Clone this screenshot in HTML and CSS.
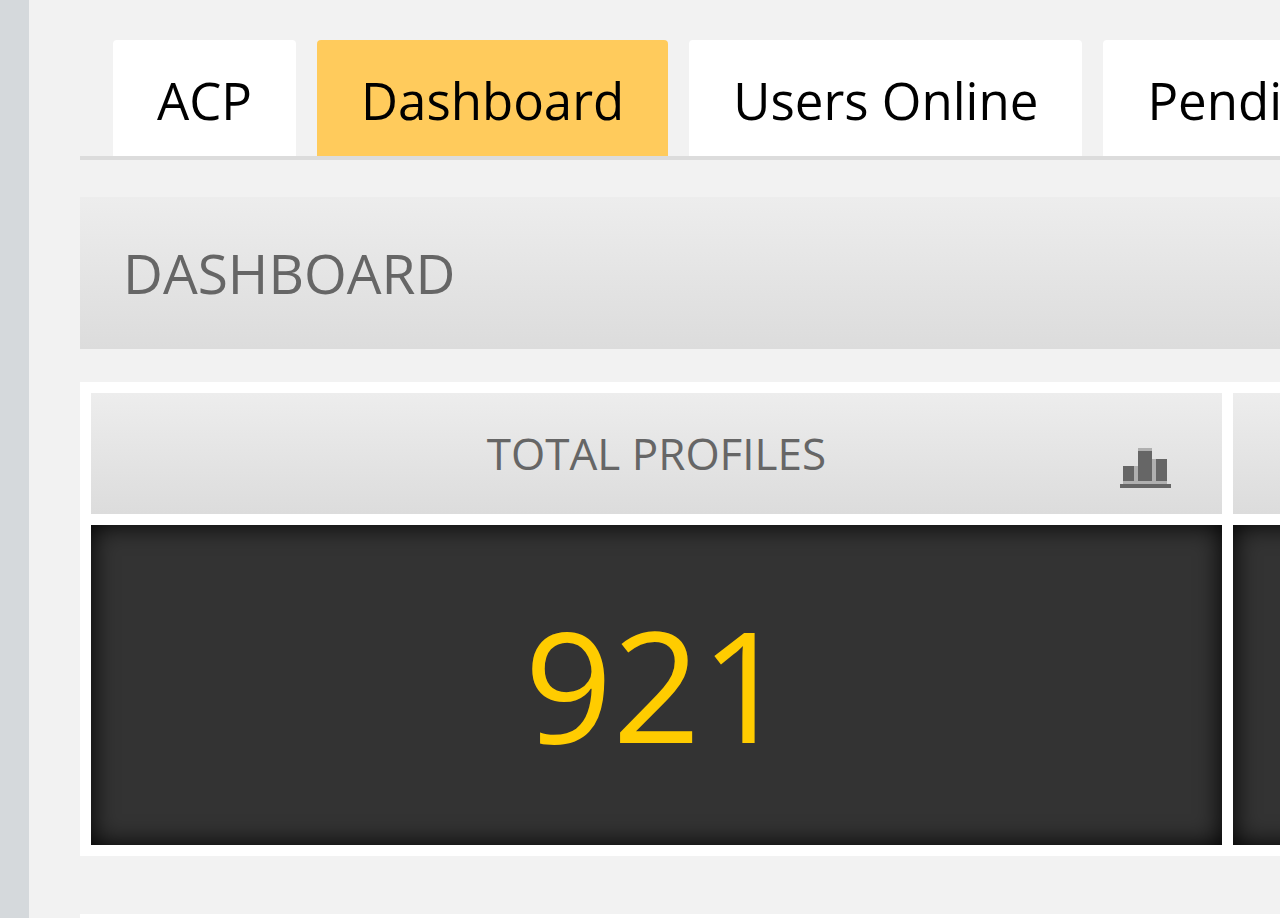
FILE: index.html
```
<!DOCTYPE html>
<html lang="en">
<head>
    <meta charset="utf-8">
    <title>Dashboard</title>
    <link rel="stylesheet" href="styles.css">
</head>

<body>

<div class="wrap">
	<div class="side"></div>
	<div class="main">
		<nav class="tabs">
			<a href="#acp">ACP</a>
			<a href="#dashboard" class="active">Dashboard</a>
			<a href="#online">Users Online</a>
			<a href="#pending">Pending</a>
		</nav>

		<h1 class="title">DASHBOARD</h1>

		<div class="stats">
			<section class="stat">
				<div class="head">
					<h2>TOTAL PROFILES</h2>
					<svg class="chart" viewBox="0 0 51 40" aria-hidden="true">
						<path d="M3 18h11v15H3zM18 3h14v30H18zM36 11h11v22H36z"/>
						<path d="M0 36h51v4H0z"/>
						<path class="soft" d="M3 33h44v3H3zM14 18h4v15h-4zM32 11h4v22h-4zM18 0h14v3H18z"/>
					</svg>
				</div>
				<p class="num">921</p>
			</section>
			<!-- next stat, runs off the right edge -->
			<section class="stat">
				<div class="head"></div>
				<p class="num"></p>
			</section>
		</div>

		<div class="box"></div>
	</div>
</div>

</body>
</html>
```
FILE: styles.css
```
*{ margin:0; padding:0; box-sizing: border-box;}
a{ text-decoration: none;}

body{ font-family: "Open Sans", sans-serif; background:#f2f2f2; overflow-x: hidden;}

.wrap{ display: flex; min-height: 100vh;}

/* side */
.side{ flex: none; width: 29px; background:#d5d9dc;}

/* main */
.main{ flex: 1; display: flex; flex-direction: column; min-width: 0; padding:40px 0 0 51px; overflow: hidden;}

/* tabs */
.tabs{ display: flex; gap: 21px; padding-left: 33px; border-bottom:4px solid #dcdcdc; overflow: hidden;}
.tabs a{ flex: none; padding:4px 44px 0; border-radius: 4px 4px 0 0; background:#fff; font-size: 51px; line-height: 112px; color:#000;}
.tabs a.active{ background:#ffcb5c;}

.title{ margin:37px 0 33px; padding:0 43px; background:linear-gradient(#ededed, #dcdcdc); font-size: 55px; line-height: 152px; font-weight: normal; color:#666;}

/* stats */
.stats{ display: grid; grid-template-columns: 1fr 107px; gap: 11px; margin-right: -60px; padding:11px 0 11px 11px; background:#fff;}
.stat .head{ display: grid; grid-template-columns: 1fr auto 1fr; height: 121px; margin-bottom: 11px; background:linear-gradient(#ededed, #dcdcdc);}
.stat h2{ grid-column: 2; font-size: 44px; line-height: 121px; font-weight: normal; color:#666;}
.stat .chart{ align-self: end; justify-self: end; width: 51px; height: 40px; margin:0 51px 26px 0; fill:#666;}
.stat .chart .soft{ fill:#b0b0b0;}
.stat .num{ height: 320px; background:#333; box-shadow: inset 0 0 26px #000; font-size: 154px; line-height: 316px; text-align: center; color:#fc0;}

.box{ flex: 1; min-height: 4px; margin-top: 58px; background:#fff;}
```
